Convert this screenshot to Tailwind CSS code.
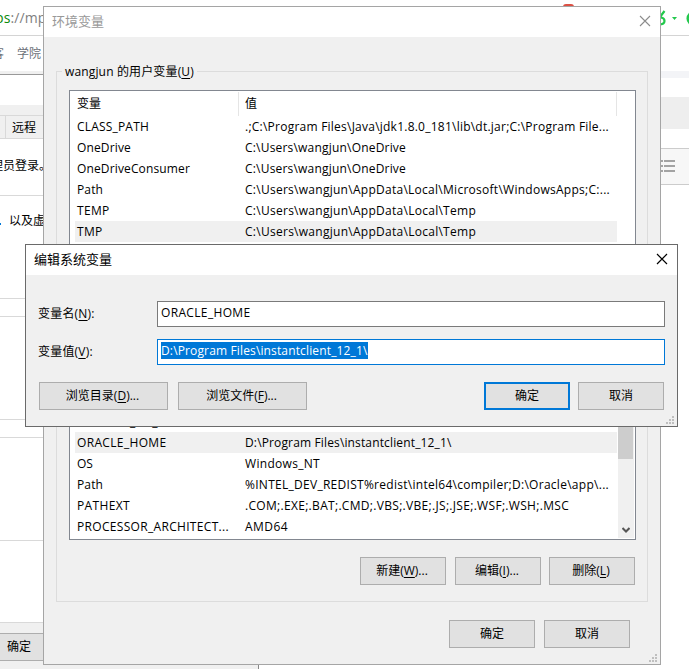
<!DOCTYPE html>
<html lang="zh">
<head>
<meta charset="utf-8">
<title>环境变量</title>
<script src="https://cdn.jsdelivr.net/npm/@tailwindcss/browser@4"></script>
</head>
<body class="relative w-[689px] h-[669px] overflow-hidden bg-white text-black text-[12px] leading-[16px] whitespace-nowrap font-['Open_Sans','Noto_Sans_CJK_SC',sans-serif]">

<!-- Windows behind the dialogs -->
<div class="flex justify-between h-[669px]">
  <div class="w-[259px] h-full overflow-hidden flex flex-col">
    <div class="h-[36px] border-b border-[#d4d4d4] pt-[8px] text-[14px] leading-[20px] text-[#808080] tracking-[0.1px]"><span class="-ml-[5px] text-[#0a8a0a]">ps</span>://mp</div>
    <div class="h-[35px] flex gap-[13px] pt-[10px] text-[#6b7078]"><span class="-ml-[8px]">客</span><span>学院</span></div>
    <div class="h-[4px] bg-[#f0f0f0] border-b border-[#999]"></div>
    <div class="h-[30px]"></div>
    <div class="h-[34px] bg-[#f0f0f0] border-b border-[#d9d9d9] flex items-end">
      <div class="w-full h-[23px] border-t border-[#d9d9d9] flex"><div class="w-[6px] border-r border-[#d9d9d9]"></div><div class="pl-[6px] pt-[4px]">远程</div></div>
    </div>
    <div class="h-[57px] border-b border-[#d9d9d9] pt-[19px]"><span class="-ml-[9px]">理员登录。</span></div>
    <div class="h-[103px] border-b border-[#d9d9d9] pt-[17px] flex"><span class="w-[9px] -mt-px"><span class="block w-px h-[2px] mt-[11px] bg-[#0078d7]"></span></span><span>以及虚</span></div>
    <div class="h-[18px] border-b border-[#d9d9d9]"></div>
    <div class="h-[103px] border-b border-[#d9d9d9]"></div>
    <div class="h-[18px] border-b border-[#d9d9d9]"></div>
    <div class="h-[103px] border-b border-[#d9d9d9]"></div>
    <div class="h-[82px] border-b border-[#d9d9d9]"></div>
    <div class="grow bg-[#f0f0f0] border-r border-[#888] pt-[10px]">
      <div class="w-[70px] h-[28px] bg-[#e1e1e1] border-y border-[#adadad] pl-[7px] pt-[5px]">确定</div>
    </div>
  </div>
  <div class="relative w-[140px] h-full flex flex-col">
    <div class="h-[36px] border-b border-[#d4d4d4] flex">
      <div class="w-[38px] h-[6px] pl-[14px] pt-[4px]"><div class="w-[11px] h-[3px] rounded-t-full bg-[#dc5044]"></div></div>
      <svg class="mt-[8px] ml-[63px]" width="39" height="22" viewBox="0 0 39 22" fill="none">
        <path d="M14.500 3L10 9M11 9.500Q14.500 10 14.500 13Q14.500 16.500 9 16.500" stroke="#22c84c" stroke-width="2.200"/>
        <path d="M22 9h5l-2.500 3z" fill="#22c84c"/>
        <circle cx="44" cy="10.500" r="6.300" stroke="#22c84c" stroke-width="2.500"/>
      </svg>
    </div>
    <div class="h-[35px]"></div>
    <div class="h-[7px] bg-[#f3f4f7]"></div>
    <div class="h-[19px]"></div>
    <div class="h-[32px] bg-[#eeeeee]"></div>
    <div class="h-[19px]"></div>
    <div class="h-[37px] bg-[#f7f7f7] border-y border-[#cccccc] pl-[107px] pt-[10px]">
      <svg width="20" height="14" viewBox="0 0 20 14" stroke="#a3a3a3" stroke-width="1.800"><path d="M3.500 2h3.500M3.500 7h3.500M3.500 12h3.500M8 2h11M8 7h11M8 12h11"/></svg>
    </div>
  </div>
</div>

<!-- Environment variables window -->
<div class="absolute left-[43px] top-[6px] w-[618px] h-[659px] border border-[#a5a5a5] bg-[#f0f0f0] flex flex-col">
  <div class="h-[30px] bg-white flex justify-between pl-[8px] pr-[9px]">
    <span class="text-[13px] leading-[18px] pt-[5px] text-[#999]">环境变量</span>
    <svg class="mt-[8px]" width="12" height="12" viewBox="0 0 12 12" stroke="#8c8c8c" stroke-width="1.100"><path d="M1 1l10 10M11 1L1 11"/></svg>
  </div>
  <div class="mt-[34px] ml-[12px] w-[592px] h-[230px] border border-[#dcdcdc] pl-[12px]">
    <div class="h-[18px]"><span class="relative -left-[7px] -top-[8px] px-[3px] bg-[#f0f0f0] tracking-[0.150px]">wangjun 的用户变量(<u class="underline-offset-2">U</u>)</span></div>
    <div class="w-[567px] h-[172px] border border-[#828790] bg-white">
      <div class="h-[25px] pt-px flex leading-[23px]">
        <div class="w-[169px] h-[24px] pl-[7px] border-r border-[#e5e5e5]">变量</div>
        <div class="w-[378px] h-[24px] pl-[6px] border-r border-[#e5e5e5]">值</div>
      </div>
      <div class="ml-[5px] w-[542px] leading-[21px]">
        <div class="h-[21px] pl-[2px] flex"><span class="w-[168px] tracking-[0.190px]">CLASS_PATH</span><span class="tracking-[0.235px]">.;C:\Program Files\Java\jdk1.8.0_181\lib\dt.jar;C:\Program File...</span></div>
        <div class="h-[21px] pl-[2px] flex"><span class="w-[168px] tracking-[0.140px]">OneDrive</span><span class="tracking-[0.194px]">C:\Users\wangjun\OneDrive</span></div>
        <div class="h-[21px] pl-[2px] flex"><span class="w-[168px] tracking-[0.140px]">OneDriveConsumer</span><span class="tracking-[0.194px]">C:\Users\wangjun\OneDrive</span></div>
        <div class="h-[21px] pl-[2px] flex"><span class="w-[168px] tracking-[0.140px]">Path</span><span class="tracking-[0.270px]">C:\Users\wangjun\AppData\Local\Microsoft\WindowsApps;C:...</span></div>
        <div class="h-[21px] pl-[2px] flex"><span class="w-[168px] tracking-[0.300px]">TEMP</span><span class="tracking-[0.273px]">C:\Users\wangjun\AppData\Local\Temp</span></div>
        <div class="h-[21px] pl-[2px] flex bg-[#f0f0f0]"><span class="w-[168px] tracking-[0.300px]">TMP</span><span class="tracking-[0.273px]">C:\Users\wangjun\AppData\Local\Temp</span></div>
      </div>
    </div>
  </div>
  <div class="mt-[11px] ml-[12px] w-[592px] h-[290px] border border-[#dcdcdc] pl-[12px]">
    <div class="h-[18px]"></div>
    <div class="w-[567px] h-[209px] border border-[#828790] bg-white flex">
      <div class="ml-[5px] w-[542px] mr-px pb-[2px] leading-[21px] flex flex-col justify-end">
        <div class="h-[21px] pl-[2px] flex"><span class="w-[168px] tracking-[0.450px]">NUMBER_OF_PROCESS...</span><span>4</span></div>
        <div class="h-[21px] pl-[2px] flex bg-[#f0f0f0]"><span class="w-[168px] tracking-[0.344px]">ORACLE_HOME</span><span class="tracking-[0.141px]">D:\Program Files\instantclient_12_1\</span></div>
        <div class="h-[21px] pl-[2px] flex"><span class="w-[168px]">OS</span><span class="tracking-[0.305px]">Windows_NT</span></div>
        <div class="h-[21px] pl-[2px] flex"><span class="w-[168px] tracking-[0.140px]">Path</span><span class="tracking-[0.277px]">%INTEL_DEV_REDIST%redist\intel64\compiler;D:\Oracle\app\...</span></div>
        <div class="h-[21px] pl-[2px] flex"><span class="w-[168px] tracking-[0.359px]">PATHEXT</span><span class="tracking-[0.306px]">.COM;.EXE;.BAT;.CMD;.VBS;.VBE;.JS;.JSE;.WSF;.WSH;.MSC</span></div>
        <div class="h-[21px] pl-[2px] flex"><span class="w-[168px] tracking-[0.318px]">PROCESSOR_ARCHITECT...</span><span class="tracking-[0.438px]">AMD64</span></div>
      </div>
      <div class="w-[16px] h-[206px] bg-[#f0f0f0] flex flex-col justify-between">
        <div class="w-[15px] h-[110px] mt-[17px] bg-[#cdcdcd]"></div>
        <svg class="ml-[4px] mb-[4px]" width="8" height="7" viewBox="0 0 8 7" fill="none" stroke="#555" stroke-width="2"><path d="M.5 1L4 4.500L7.500 1"/></svg>
      </div>
    </div>
    <div class="mt-[17px] pr-[12px] flex justify-end text-center leading-[26px]">
      <div class="w-[86px] h-[28px] border border-[#adadad] bg-[#e1e1e1] pr-[2px] mr-[9px]">新建(<u class="underline-offset-2">W</u>)...</div>
      <div class="w-[86px] h-[28px] border border-[#adadad] bg-[#e1e1e1] pr-[2px] mr-[8px]">编辑(<u class="underline-offset-2">I</u>)...</div>
      <div class="w-[86px] h-[28px] border border-[#adadad] bg-[#e1e1e1] pr-[2px]">删除(<u class="underline-offset-2">L</u>)</div>
    </div>
  </div>
  <div class="mt-[18px] pr-[30px] flex justify-end gap-[9px] text-center leading-[26px]">
    <div class="w-[86px] h-[28px] border border-[#adadad] bg-[#e1e1e1]">确定</div>
    <div class="w-[86px] h-[28px] border border-[#adadad] bg-[#e1e1e1]">取消</div>
  </div>
  <svg class="absolute right-[3px] bottom-[2px]" width="8" height="8" viewBox="0 0 8 8" fill="#bfbfbf"><path d="M6 0h2v2h-2zM3 3h2v2h-2zM6 3h2v2h-2zM0 6h2v2h-2zM3 6h2v2h-2zM6 6h2v2h-2z"/></svg>
</div>

<!-- Edit system variable dialog -->
<div class="absolute left-[25px] top-[244px] w-[653px] h-[183px] border border-[#6a6a6a] bg-[#f0f0f0] flex flex-col">
  <div class="h-[30px] bg-white flex justify-between pl-[8px] pr-[9px]">
    <span class="text-[13px] leading-[18px] pt-[5px]">编辑系统变量</span>
    <svg class="mt-[8px]" width="12" height="12" viewBox="0 0 12 12" stroke="#000" stroke-width="1.200"><path d="M1 1l10 10M11 1L1 11"/></svg>
  </div>
  <div class="mt-[26px] flex pl-[12px]">
    <span class="w-[119px] pt-[5px] tracking-[0.200px]">变量名(<u class="underline-offset-2">N</u>):</span>
    <div class="w-[508px] h-[26px] border border-[#7a7a7a] bg-white pl-[3px] pt-[3px] tracking-[0.344px]">ORACLE_HOME</div>
  </div>
  <div class="mt-[12px] flex pl-[12px]">
    <span class="w-[119px] pt-[5px] tracking-[0.200px]">变量值(<u class="underline-offset-2">V</u>):</span>
    <div class="w-[508px] h-[26px] border border-[#0078d7] bg-white pl-[3px] pt-[2px]"><div class="w-[207px] h-[17px] leading-[18px] bg-[#0078d7] text-white tracking-[0.141px]">D:\Program Files\instantclient_12_1\</div></div>
  </div>
  <div class="mt-[17px] pl-[13px] flex text-center leading-[26px]">
    <div class="w-[129px] h-[28px] border border-[#adadad] bg-[#e1e1e1] pr-[2px] mr-[10px]">浏览目录(<u class="underline-offset-2">D</u>)...</div>
    <div class="w-[129px] h-[28px] border border-[#adadad] bg-[#e1e1e1] pr-[2px] mr-[177px]">浏览文件(<u class="underline-offset-2">F</u>)...</div>
    <div class="w-[86px] h-[28px] border-2 border-[#0078d7] bg-[#e1e1e1] mr-[8px] leading-[24px]">确定</div>
    <div class="w-[86px] h-[28px] border border-[#adadad] bg-[#e1e1e1]">取消</div>
  </div>
  <svg class="absolute right-[3px] bottom-[2px]" width="8" height="8" viewBox="0 0 8 8" fill="#bfbfbf"><path d="M6 0h2v2h-2zM3 3h2v2h-2zM6 3h2v2h-2zM0 6h2v2h-2zM3 6h2v2h-2zM6 6h2v2h-2z"/></svg>
</div>
</body>
</html>
